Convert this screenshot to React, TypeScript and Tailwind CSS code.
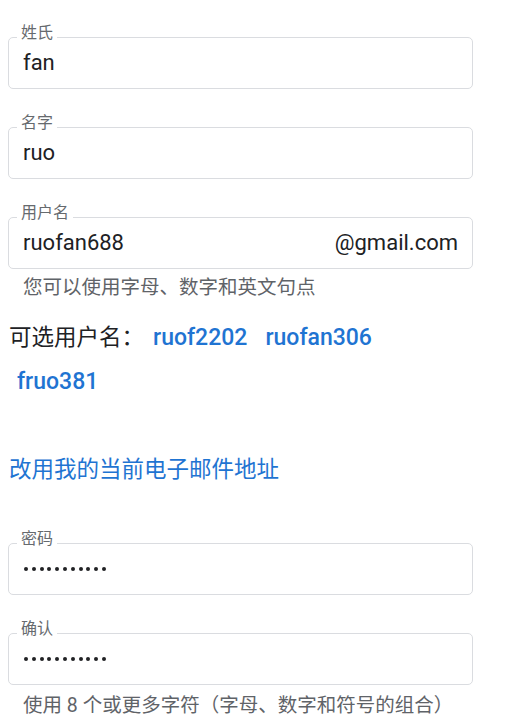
const font = { fontFamily: '"Roboto", "Noto Sans CJK SC", sans-serif' };

function Field({ label, value, suffix, password }: { label: string; value: string; suffix?: string; password?: boolean }) {
  return (
    <div className="relative h-[52px] w-full rounded-[5px] border border-[#dadce0] bg-white flex items-center px-[14px]">
      <span className="absolute left-[8px] top-[-16px] bg-white px-[4px] text-[16px] leading-[22px] text-[#666a6e]">
        {label}
      </span>
      {password ? (
        <span className="flex gap-[3.8px] pl-[1px]">
          {Array.from({ length: 11 }).map((_, i) => (
            <span key={i} className="block h-[4px] w-[4px] rounded-full bg-[#202124]" />
          ))}
        </span>
      ) : (
        <span className="flex-1 text-[22px] leading-[28px] text-[#202124]">{value}</span>
      )}
      {suffix && <span className="text-[22px] leading-[28px] text-[#202124]">{suffix}</span>}
    </div>
  );
}

export default function App() {
  const options = ["ruof2202", "ruofan306", "fruo381"];

  return (
    <div className="min-h-screen bg-white" style={font}>
      <div className="w-[465px] ml-[8px] pt-[37px] pb-[10px] flex flex-col">
        <Field label="姓氏" value="fan" />
        <div className="mt-[38px]">
          <Field label="名字" value="ruo" />
        </div>
        <div className="mt-[38px]">
          <Field label="用户名" value="ruofan688" suffix="@gmail.com" />
        </div>
        <p className="mt-[7px] pl-[15px] text-[19.5px] leading-[24px] text-[#5f6368]">
          您可以使用字母、数字和英文句点
        </p>

        <div className="mt-[16px] max-w-[440px] flex flex-wrap items-center">
          <span className="h-11 flex items-center pl-[1px] text-[22.5px] text-[#202124]">可选用户名：</span>
          {options.map((o) => (
            <a key={o} className="h-11 flex items-center px-[9px] text-[23px] font-medium text-[#1f74d2]">
              {o}
            </a>
          ))}
        </div>

        <a className="mt-[51px] pl-[1px] text-[22.5px] leading-[28px] text-[#1f74d2]">改用我的当前电子邮件地址</a>

        <div className="mt-[60px]">
          <Field label="密码" value="" password />
        </div>
        <div className="mt-[38px]">
          <Field label="确认" value="" password />
        </div>
        <p className="mt-[9px] pl-[15px] text-[19.5px] leading-[24px] text-[#5f6368] whitespace-nowrap">
          使用 8 个或更多字符（字母、数字和符号的组合）
        </p>
      </div>
    </div>
  );
}
